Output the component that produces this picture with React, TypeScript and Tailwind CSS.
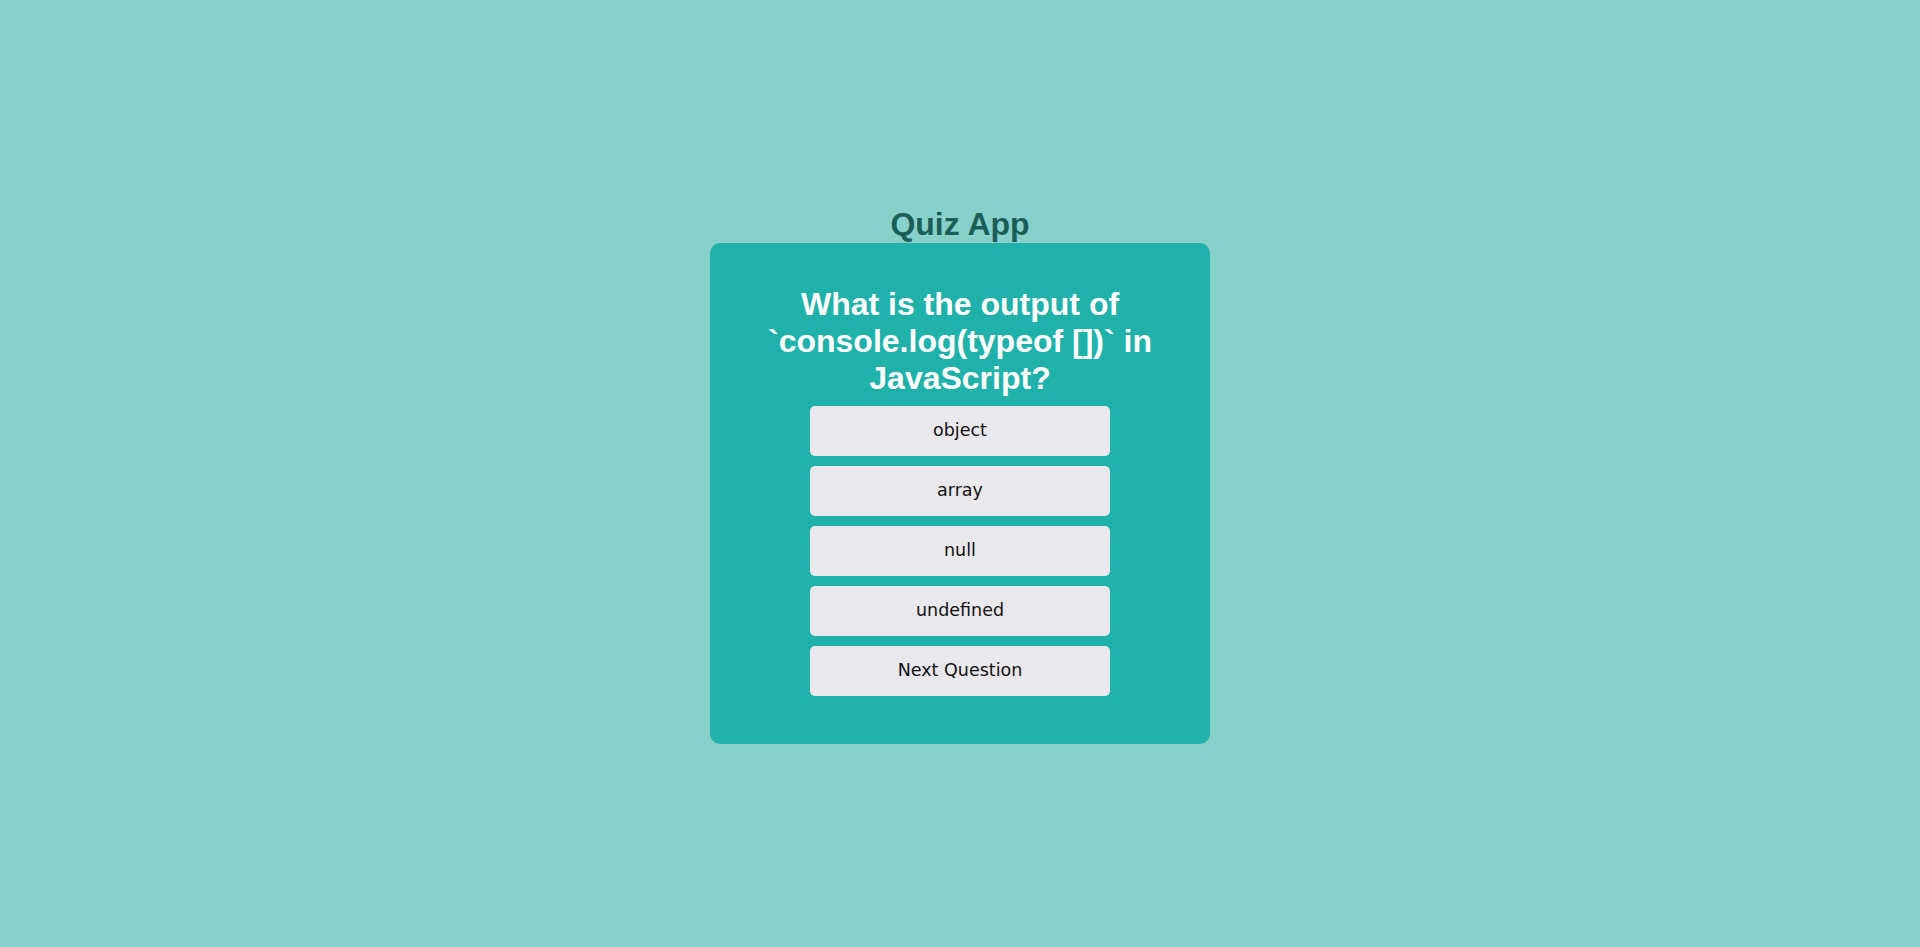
const options = ["object", "array", "null", "undefined"];

export default function App() {
  return (
    <div className="flex min-h-screen flex-col items-center justify-center bg-[#88d1cb] pt-[3px] font-['Liberation_Sans',Arial,sans-serif]">
      <h1 className="text-[32px] leading-[1.15] font-bold text-[#1b5e58]">Quiz App</h1>

      <div className="flex w-[500px] flex-col items-center rounded-[10px] bg-[#20b2aa] px-5 pt-[43px] pb-[48px]">
        <h2 className="mb-[9px] text-center text-[32px] leading-[1.15] font-bold text-white">
          What is the output of `console.log(typeof [])` in JavaScript?
        </h2>

        <div className="flex flex-col gap-[10px]">
          {options.map((opt) => (
            <button
              key={opt}
              className="h-[50px] w-[300px] rounded-[5px] bg-[#e9e8ed] font-['DejaVu_Sans',Verdana,sans-serif] text-[17.5px] text-[#111]"
            >
              {opt}
            </button>
          ))}
          <button className="h-[50px] w-[300px] rounded-[5px] bg-[#e9e8ed] font-['DejaVu_Sans',Verdana,sans-serif] text-[17.5px] text-[#111]">
            Next Question
          </button>
        </div>
      </div>
    </div>
  );
}
